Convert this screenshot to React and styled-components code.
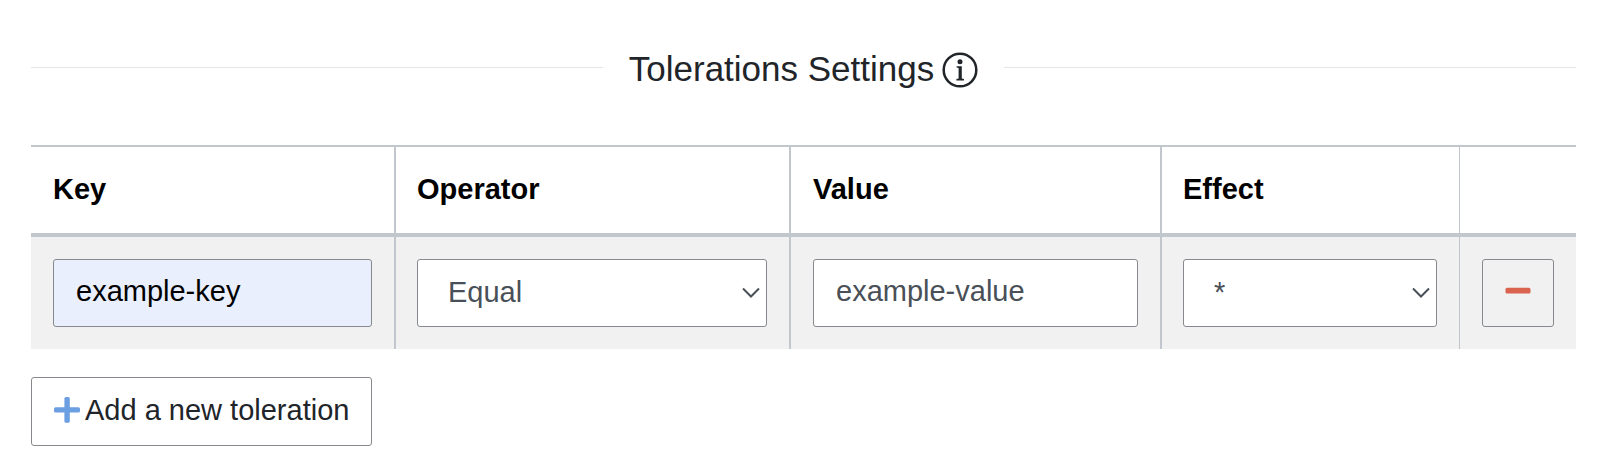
import React, { useState } from "react";
import styled, { createGlobalStyle } from "styled-components";

const GlobalStyle = createGlobalStyle`
  *, *::before, *::after { box-sizing: border-box; }
  body {
    margin: 0;
    background: #fff;
    color: #212529;
    font-family: "Liberation Sans", Arial, sans-serif;
    font-size: 29px;
    line-height: 44px;
  }
`;

const Page = styled.main`
  padding: 47px 32px 24px 31px;
`;

const SectionTitle = styled.h2`
  display: flex;
  align-items: center;
  gap: 26px;
  margin: 0 0 54px;
  font-size: 35px;
  font-weight: 400;
  line-height: 44px;
`;

const Rule = styled.span`
  flex: 1;
  height: 1px;
  margin-bottom: 3px;
  background: #e4e5e7;
`;

const TitleText = styled.span`
  display: flex;
  align-items: center;
  gap: 8px;
`;

const InfoIcon = styled.svg`
  width: 36px;
  height: 36px;
  margin-top: 2px;
`;

const Table = styled.table`
  width: 100%;
  table-layout: fixed;
  border-collapse: separate;
  border-spacing: 0;
  border-top: 2px solid #c1c7cc;
`;

const HeaderCell = styled.th`
  height: 90px;
  padding: 0 22px 3px;
  padding-left: ${(p) => (p.$tight ? "21px" : "22px")};
  border-bottom: 4px solid #c1c7cc;
  color: #000;
  font-weight: 700;
  text-align: left;
  background: ${(p) =>
    p.$divider
      ? `linear-gradient(#c1c7cc, #c1c7cc) right / ${p.$divider}px 100% no-repeat`
      : "none"};
`;

const Cell = styled.td`
  padding: 22px;
  padding-left: ${(p) => (p.$tight ? "21px" : "22px")};
  border-right: ${(p) => p.$divider || 0}px solid #c1c7cc;
  background: #f1f1f1;
`;

const TextInput = styled.input`
  display: block;
  width: 100%;
  height: 68px;
  padding: 0 22px 4px;
  border: 1px solid #868a8e;
  border-radius: 3px;
  background: ${(p) => (p.$filled ? "#e9effc" : "#fff")};
  color: ${(p) => (p.$filled ? "#000" : "#495057")};
  font: inherit;
`;

const SelectBox = styled.div`
  display: grid;
  align-items: center;
`;

const Select = styled.select`
  grid-area: 1 / 1;
  width: 100%;
  height: 68px;
  padding: 0 40px 2px 30px;
  border: 1px solid #868a8e;
  border-radius: 3px;
  appearance: none;
  background: #fff;
  color: #495057;
  font: inherit;
`;

const Chevron = styled.svg`
  grid-area: 1 / 1;
  justify-self: end;
  width: 18px;
  height: 12px;
  margin-right: 7px;
  pointer-events: none;
`;

const Button = styled.button`
  display: inline-flex;
  align-items: center;
  justify-content: center;
  gap: 5px;
  height: ${(p) => (p.$square ? "68px" : "69px")};
  width: ${(p) => (p.$square ? "100%" : "auto")};
  padding: 0 22px 4px;
  border: 1px solid #868a8e;
  border-radius: 3px;
  background: transparent;
  color: #212529;
  font: inherit;
  white-space: nowrap;
  cursor: pointer;
  vertical-align: top;
`;

const Glyph = styled.svg`
  flex: none;
  width: 26px;
  height: 26px;
`;

const Actions = styled.div`
  margin-top: 28px;
`;

function Dropdown({ label, options }) {
  const [value, setValue] = useState(options[0]);
  return (
    <SelectBox>
      <Select aria-label={label} value={value} onChange={(e) => setValue(e.target.value)}>
        {options.map((o) => (
          <option key={o}>{o}</option>
        ))}
      </Select>
      <Chevron viewBox="0 0 18 12" fill="none" stroke="#495057" strokeWidth="2" aria-hidden="true">
        <path d="M1 1.5 9 9.5 17 1.5" />
      </Chevron>
    </SelectBox>
  );
}

export default function App() {
  return (
    <Page>
      <GlobalStyle />
      <SectionTitle>
        <Rule />
        <TitleText>
          Tolerations Settings
          <InfoIcon viewBox="0 0 36 36" role="img" aria-label="Information">
            <circle cx="18" cy="18" r="16.3" fill="none" stroke="#212529" strokeWidth="2.5" />
            <circle cx="18" cy="9.8" r="2.5" fill="#212529" />
            <path
              fill="#212529"
              d="M14.6 14.2H19.8V26.4L22 27V28.4H14.4V27L16.6 26.4V15.9L14.6 15.4Z"
            />
          </InfoIcon>
        </TitleText>
        <Rule />
      </SectionTitle>

      <Table>
        <colgroup>
          <col width="365" />
          <col width="395" />
          <col width="371" />
          <col width="298" />
          <col width="116" />
        </colgroup>
        <thead>
          <tr>
            <HeaderCell $divider={2}>Key</HeaderCell>
            <HeaderCell $divider={2} $tight>Operator</HeaderCell>
            <HeaderCell $divider={2}>Value</HeaderCell>
            <HeaderCell $divider={1} $tight>Effect</HeaderCell>
            <HeaderCell />
          </tr>
        </thead>
        <tbody>
          <tr>
            <Cell $divider={2}>
              <TextInput $filled aria-label="Key" defaultValue="example-key" />
            </Cell>
            <Cell $divider={2} $tight>
              <Dropdown label="Operator" options={["Equal", "Exists"]} />
            </Cell>
            <Cell $divider={2}>
              <TextInput aria-label="Value" defaultValue="example-value" />
            </Cell>
            <Cell $divider={1} $tight>
              <Dropdown
                label="Effect"
                options={["*", "NoSchedule", "PreferNoSchedule", "NoExecute"]}
              />
            </Cell>
            <Cell>
              <Button type="button" $square aria-label="Remove toleration">
                <Glyph viewBox="0 0 26 26" aria-hidden="true">
                  <rect x="0.5" y="9.8" width="25" height="5.8" rx="1.6" fill="#d9634f" />
                </Glyph>
              </Button>
            </Cell>
          </tr>
        </tbody>
      </Table>

      <Actions>
        <Button type="button">
          <Glyph viewBox="0 0 26 26" aria-hidden="true">
            <path
              fill="#6c9fe2"
              d="M12 0H14.2Q15.8 0 15.8 1.6V10.2H24.4Q26 10.2 26 11.8V14Q26 15.6 24.4 15.6H15.8V24.2Q15.8 25.8 14.2 25.8H12Q10.4 25.8 10.4 24.2V15.6H1.6Q0 15.6 0 14V11.8Q0 10.2 1.6 10.2H10.4V1.6Q10.4 0 12 0Z"
            />
          </Glyph>
          Add a new toleration
        </Button>
      </Actions>
    </Page>
  );
}
